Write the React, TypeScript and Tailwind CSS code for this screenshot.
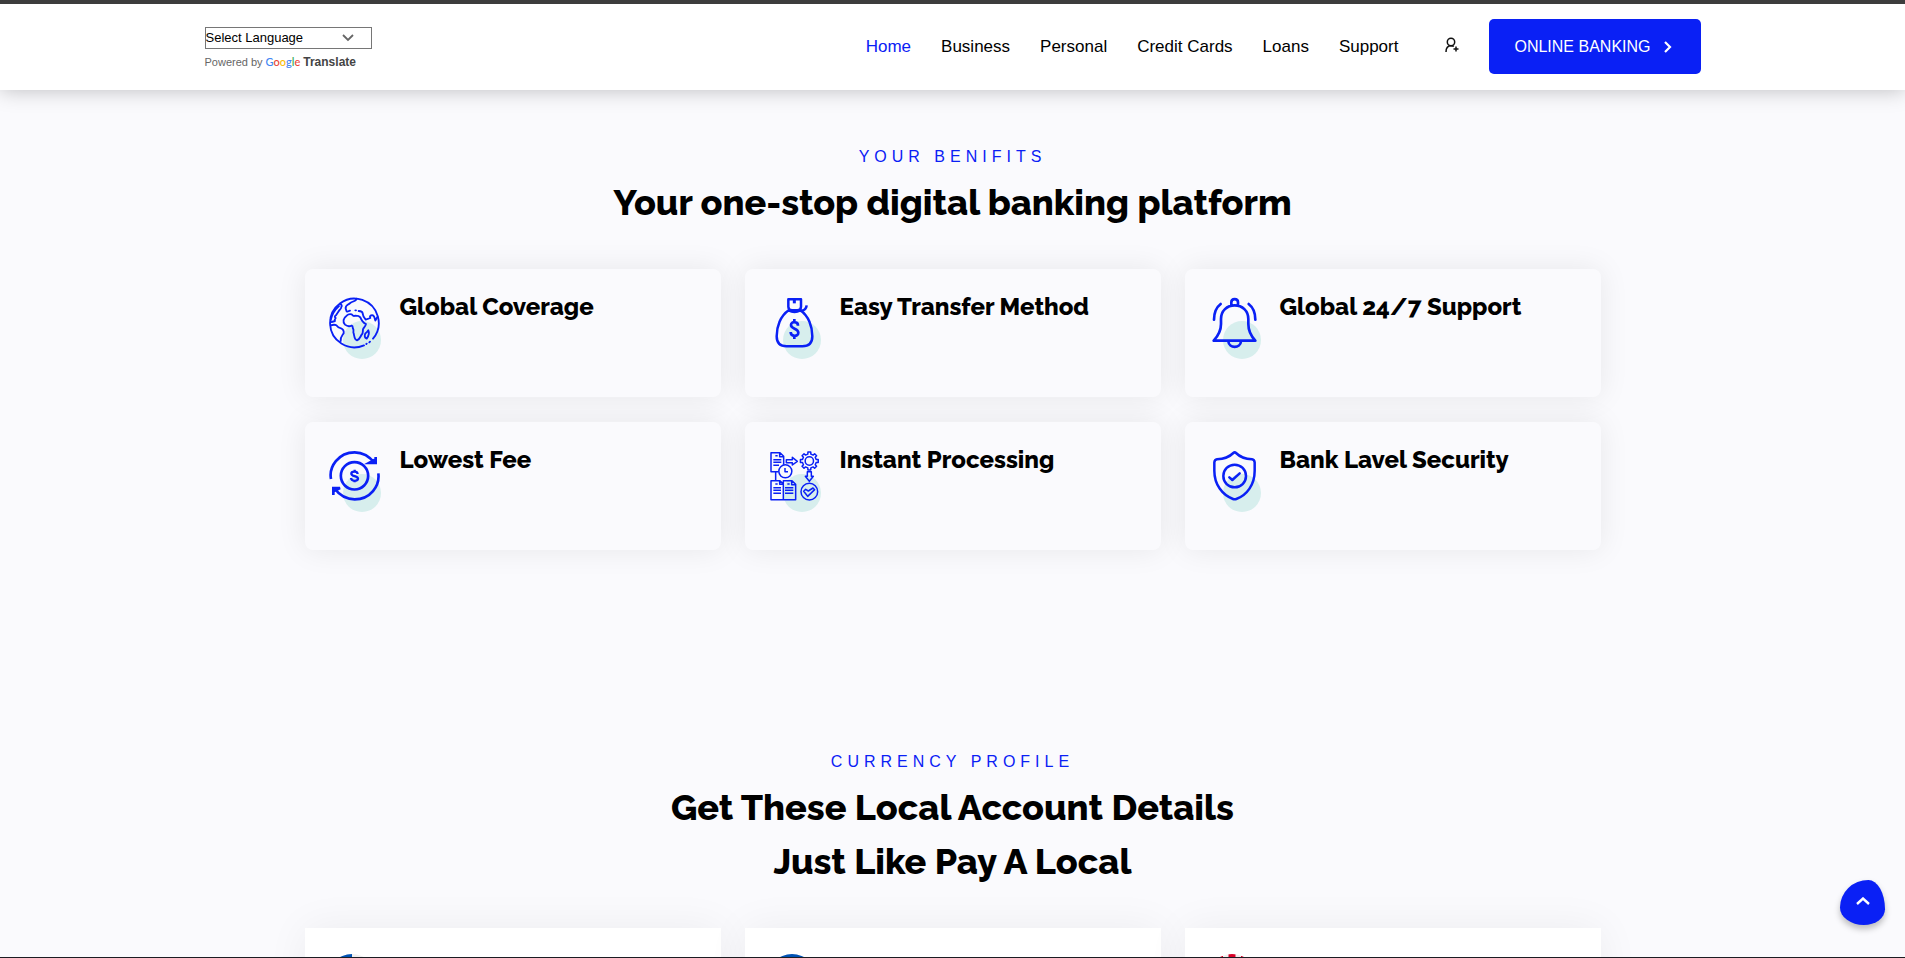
import type { ReactNode } from "react";

const BLUE = "#0a20f5";

type Benefit = { title: string; icon: ReactNode };

function gearPath(cx: number, cy: number, inner: number, outer: number, teeth: number) {
  const points: string[] = [];
  const step = (Math.PI * 2) / teeth;
  for (let i = 0; i < teeth; i++) {
    const mid = i * step - Math.PI / 2;
    const corners: [number, number][] = [
      [-0.28, inner],
      [-0.2, outer],
      [0.2, outer],
      [0.28, inner],
    ];
    for (const [offset, radius] of corners) {
      const angle = mid + offset * step;
      points.push(`${(cx + radius * Math.cos(angle)).toFixed(1)} ${(cy + radius * Math.sin(angle)).toFixed(1)}`);
    }
  }
  return `M${points.join("L")}Z`;
}

function GlobeIcon() {
  return (
    <svg className="relative size-[52px]" viewBox="101 111 156 156" fill="none" stroke={BLUE} strokeWidth="5.500" strokeLinecap="round" strokeLinejoin="round">
      <path d="M206 256A73 73 0 1 1 233 236M224 245l-2 2M214 251l-1 1" />
      <path d="M184 116c-2 6-8 8-14 10s-6 5-11 7c-5 3-9 7-8 13l3 8c3 3 5-1 10-2M180 151h2M190 153c8 0 12 4 12 8 1 8 5 14 9 18l14-5c-3-5 0-9 8-8 4 2 5 7 7 16l6-11" />
      <path d="M135 131c5 4 5 7 3 10-1 9-5 6-8 13l-8 12c-5 3-4 6-1 8-3 3-4 5-2 9l-10 3M106 196c7-2 12-3 17 0 4 6 7 8 14 9 8 3 9 8 8 15-5 8-10 10-9 23M106 180c3-14 9-28 25-42" />
      <path d="M154 167c4-4 9-6 15-4 3 5 7 6 11 4 7 0 12 1 15 5 4 10 7 16 17 20-1 8-8 11-9 16-1 6 1 12-4 16-4 5-5 14-14 17-8-2-8-13-10-21-3-4 2-9-2-14-2-4 1-8-4-9-7 3-14 2-20-3-8-8-5-20 5-27Z" />
      <path d="M219 211c4 8 0 18-5 25-7-3-7-9-4-16 4-1 6-4 9-9Z" />
    </svg>
  );
}

function MoneyBagIcon() {
  return (
    <svg className="relative size-[52px]" viewBox="102 111 156 156" fill="none" stroke={BLUE} strokeWidth="8" strokeLinejoin="round">
      <path d="M160 118h38v22c0 6-5 11-11 11h-16c-6 0-11-5-11-11ZM197 153c10-1 17-7 18-17" strokeWidth="7.500" />
      <path d="M178 118v12" strokeWidth="9" />
      <path d="M161 151c-25 17-36 49-36 78 0 20 10 30 30 30h47c20 0 30-10 30-30 0-29-11-61-36-78-11 6-24 6-35 0Z" strokeWidth="7.500" />
      <path d="M189 197c0-14-21-14-21-2 0 13 22 9 22 23 0 13-23 13-23-2M178 177v9M178 227v10" />
    </svg>
  );
}

function BellIcon() {
  return (
    <svg className="relative size-[52px]" viewBox="117 111 156 156" fill="none" stroke={BLUE} strokeWidth="8" strokeLinecap="round" strokeLinejoin="round">
      <path d="M131 242h125c-13-14-21-32-21-50v-15c0-24-18-41-41-41s-41 17-41 41v15c0 18-9 36-22 50ZM184 135v-8c0-13 20-13 20 0v8M175 244c2 22 36 22 38 0M152 132c-13 10-20 26-20 47M236 132c13 10 20 26 20 47" />
    </svg>
  );
}

function FeeIcon() {
  return (
    <svg className="relative size-[52px]" viewBox="102 120 156 156" fill="none" stroke={BLUE} strokeWidth="8">
      <path d="M108 207c-7-36 22-80 71-80 26 0 46 14 61 33M242 141v18h-20l18-10M250 190c5 38-24 78-71 78-26 0-47-14-61-33M115 255v-21h20l-18 9" />
      <circle cx="178.500" cy="197.500" r="41" />
      <path d="M188 192c-1-10-19-9-19-1 0 9 20 6 20 15 0 9-20 9-21-2M179 179v6M179 210v7" strokeWidth="7" />
    </svg>
  );
}

function ProcessingIcon() {
  return (
    <svg className="relative size-[52px]" viewBox="102 120 156 156" fill="none" stroke={BLUE} strokeWidth="4.500" strokeLinejoin="round">
      <path d="M131 185h-23v-57h27l11 11v25M134 128v12h12M121 137h7M115 149h24M115 157h24M115 166h17M122 185v26" />
      <circle cx="151" cy="184" r="19.500" />
      <path d="M150 174v11h9" />
      <path d="M154 149h18v-7l15 12-15 11v-7h-18ZM217 185v14h-6l12 15 12-15h-6v-14Z" />
      <path d={gearPath(223, 153, 21, 27, 8)} />
      <circle cx="223" cy="153" r="12.500" />
      <path d="M108 212h27l10 10v47h-37ZM134 212v11h11M145 212h26l11 11v46h-37ZM170 212v12h12M121 222h7M157 222h7M115 233h23M115 241h23M115 250h23M150 233h25M150 241h25M150 250h25" />
      <circle cx="223" cy="245" r="25" />
      <path d="m206 244 6-6 8 5 14-9 5 5-21 20Z" />
    </svg>
  );
}

function ShieldIcon() {
  return (
    <svg className="relative size-[52px]" viewBox="117 120 156 156" fill="none" stroke={BLUE} strokeWidth="7.500" strokeLinecap="round" strokeLinejoin="round">
      <path d="M190 129q4-4 8 0c13 13 28 18 48 19q7 1 8 9v25c0 42-23 73-55 85q-5 2-10 0c-32-12-56-43-56-85v-25q1-8 8-9c21-1 36-6 49-19Z" />
      <circle cx="194" cy="198" r="34" />
      <path d="m178 202 9 8 22-20" />
    </svg>
  );
}

const benefits: Benefit[] = [
  { title: "Global Coverage", icon: <GlobeIcon /> },
  { title: "Easy Transfer Method", icon: <MoneyBagIcon /> },
  { title: "Global 24/7 Support", icon: <BellIcon /> },
  { title: "Lowest Fee", icon: <FeeIcon /> },
  { title: "Instant Processing", icon: <ProcessingIcon /> },
  { title: "Bank Lavel Security", icon: <ShieldIcon /> },
];

const links = ["Home", "Business", "Personal", "Credit Cards", "Loans", "Support"];

function UsFlag() {
  return (
    <svg className="size-[50px]" viewBox="0 0 50 50">
      <clipPath id="us"><circle cx="25" cy="25" r="25" /></clipPath>
      <g clipPath="url(#us)">
        <path fill="#f0f0f0" d="M0 0h50v50H0z" />
        <path fill="#d80027" d="M25 6h25v6H25zM25 18h25v6H25zM0 30h50v6H0zM0 42h50v6H0z" />
        <path fill="#0052b4" d="M0 0h25v25H0z" />
      </g>
    </svg>
  );
}

function EuFlag() {
  return (
    <svg className="size-[50px]" viewBox="0 0 50 50">
      <circle cx="25" cy="25" r="25" fill="#0052b4" />
      <circle cx="25" cy="25" r="14" fill="none" stroke="#ffda44" strokeWidth="3" strokeDasharray="3 4.330" />
    </svg>
  );
}

function UkFlag() {
  return (
    <svg className="size-[50px]" viewBox="0 0 50 50">
      <clipPath id="uk"><circle cx="25" cy="25" r="25" /></clipPath>
      <g clipPath="url(#uk)">
        <path fill="#f0f0f0" d="M0 0h50v50H0z" />
        <path fill="#0052b4" d="M5 8l12 10H1zM45 8 33 18h16zM5 42l12-10H1zM45 42 33 32h16z" />
        <path fill="#d80027" d="M21.500 0h7v21.500H50v7H28.500V50h-7V28.500H0v-7h21.500zM13 2h3v2h-3zM34 2h3v2h-3z" />
      </g>
    </svg>
  );
}

function SectionHeading({ eyebrow, children }: { eyebrow: string; children: ReactNode }) {
  return (
    <div className="text-center">
      <p className="mb-1.5 text-base leading-6 tracking-[5px] text-[#0a20f5]">{eyebrow}</p>
      <h2 className="font-['Raleway','Lato',sans-serif] text-4xl leading-[54px] font-extrabold text-black">{children}</h2>
    </div>
  );
}

function Header() {
  return (
    <header className="relative z-10 shrink-0 border-t-4 border-[#3d3d3d] bg-white shadow-[0_0_20px_rgba(0,0,0,0.25)]">
      <div className="mx-auto flex h-[86px] max-w-[1520px] items-center justify-between px-3 pb-px">
        <div className="flex flex-col gap-1 pt-[5px]">
          <div className="relative">
            <select aria-label="Select Language" className="block h-[22px] w-[167px] appearance-none border border-[#767676] bg-white text-[13px] leading-normal text-black">
              <option>Select Language</option>
            </select>
            <svg className="pointer-events-none absolute top-[7px] right-[18px] h-2 w-3" viewBox="0 0 12 8" fill="none" stroke="#666" strokeWidth="1.800">
              <path d="m1 1 5 5 5-5" />
            </svg>
          </div>
          <p className="flex items-center text-[11px] leading-[18px] text-[#666]">
            Powered by
            <a href="#translate" className="ml-[3px] flex items-center gap-[3px]">
              <span className="font-['Lato',sans-serif] text-[11px] font-medium">
                <span className="text-[#4285f4]">G</span>
                <span className="text-[#ea4335]">o</span>
                <span className="text-[#fbbc05]">o</span>
                <span className="text-[#4285f4]">g</span>
                <span className="text-[#34a853]">l</span>
                <span className="text-[#ea4335]">e</span>
              </span>
              <span className="text-xs font-bold text-[#444]">Translate</span>
            </a>
          </p>
        </div>
        <div className="flex items-center">
          <nav className="flex gap-[30px] text-[17px] leading-6">
            {links.map((label, i) => (
              <a key={label} href={`#${label}`} className={i === 0 ? "text-[#0a20f5]" : "text-black"}>
                {label}
              </a>
            ))}
          </nav>
          <button type="button" className="mr-[29px] mb-1 ml-[46px]">
            <svg className="size-4" viewBox="0 0 16 16" fill="none" stroke="#111" strokeWidth="1.500">
              <circle cx="7" cy="5" r="3.700" />
              <path d="M2 15c0-4 2-6.300 5-6.300 1 0 2 .2 2.800.8M12 9.500v5M9.500 12h5" />
            </svg>
          </button>
          <a href="#online-banking" className="flex h-[55px] items-center gap-3 rounded-[5px] bg-[#0a20f5] pr-[29px] pl-[25px] text-base text-white">
            ONLINE BANKING
            <svg className="h-3 w-[9px]" viewBox="0 0 9 12" fill="none" stroke="currentColor" strokeWidth="2.200">
              <path d="m2 1 5 5-5 5" />
            </svg>
          </a>
        </div>
      </div>
    </header>
  );
}

export default function App() {
  return (
    <div className="flex h-screen flex-col overflow-hidden border-b border-[#1c1c22] bg-[#fafafd] font-['Liberation_Sans',Arial,sans-serif]">
      <Header />
      <main className="min-h-0 flex-1 overflow-hidden">
        <section className="mx-auto max-w-[1320px] px-3 pt-[55px] pb-[100px]">
          <SectionHeading eyebrow="YOUR BENIFITS">Your one-stop digital banking platform</SectionHeading>
          <div className="mt-10 grid grid-cols-3 gap-x-6 gap-y-[25px]">
            {benefits.map(({ title, icon }) => (
              <article key={title} className="flex h-32 gap-[19px] rounded-lg bg-[#fafafd] px-6 pt-[28px] shadow-[0_0_30px_rgba(0,0,0,0.08)]">
                <div className="relative size-[52px] shrink-0">
                  <span className="absolute top-6 left-[14px] size-[38px] rounded-full bg-[#d7eeed]" />
                  {icon}
                </div>
                <h3 className="font-['Raleway','Lato',sans-serif] text-2xl leading-5 font-extrabold text-black">{title}</h3>
              </article>
            ))}
          </div>
        </section>
        <section className="mx-auto max-w-[1320px] px-3 pt-[100px]">
          <SectionHeading eyebrow="CURRENCY PROFILE">
            Get These Local Account Details
            <br />
            Just Like Pay A Local
          </SectionHeading>
          <div className="mt-10 grid grid-cols-3 gap-x-6">
            {[<UsFlag key="us" />, <EuFlag key="eu" />, <UkFlag key="uk" />].map((flag, i) => (
              <article key={i} className="h-56 bg-white px-[22px] pt-[26px] shadow-[0_0_40px_rgba(0,0,0,0.06)]">
                {flag}
              </article>
            ))}
          </div>
        </section>
      </main>
      <button
        type="button"
        className="fixed right-5 bottom-[33px] flex size-[45px] items-center justify-center rounded-[63%_37%_47%_53%/61%_65%_35%_39%] bg-[#0a20f5] pb-1 shadow-[0_4px_6px_rgba(0,0,0,0.25)]"
      >
        <svg className="h-2 w-[14px]" viewBox="0 0 14 8" fill="none" stroke="#fff" strokeWidth="2.400">
          <path d="m1 7 6-5.500L13 7" />
        </svg>
      </button>
    </div>
  );
}
